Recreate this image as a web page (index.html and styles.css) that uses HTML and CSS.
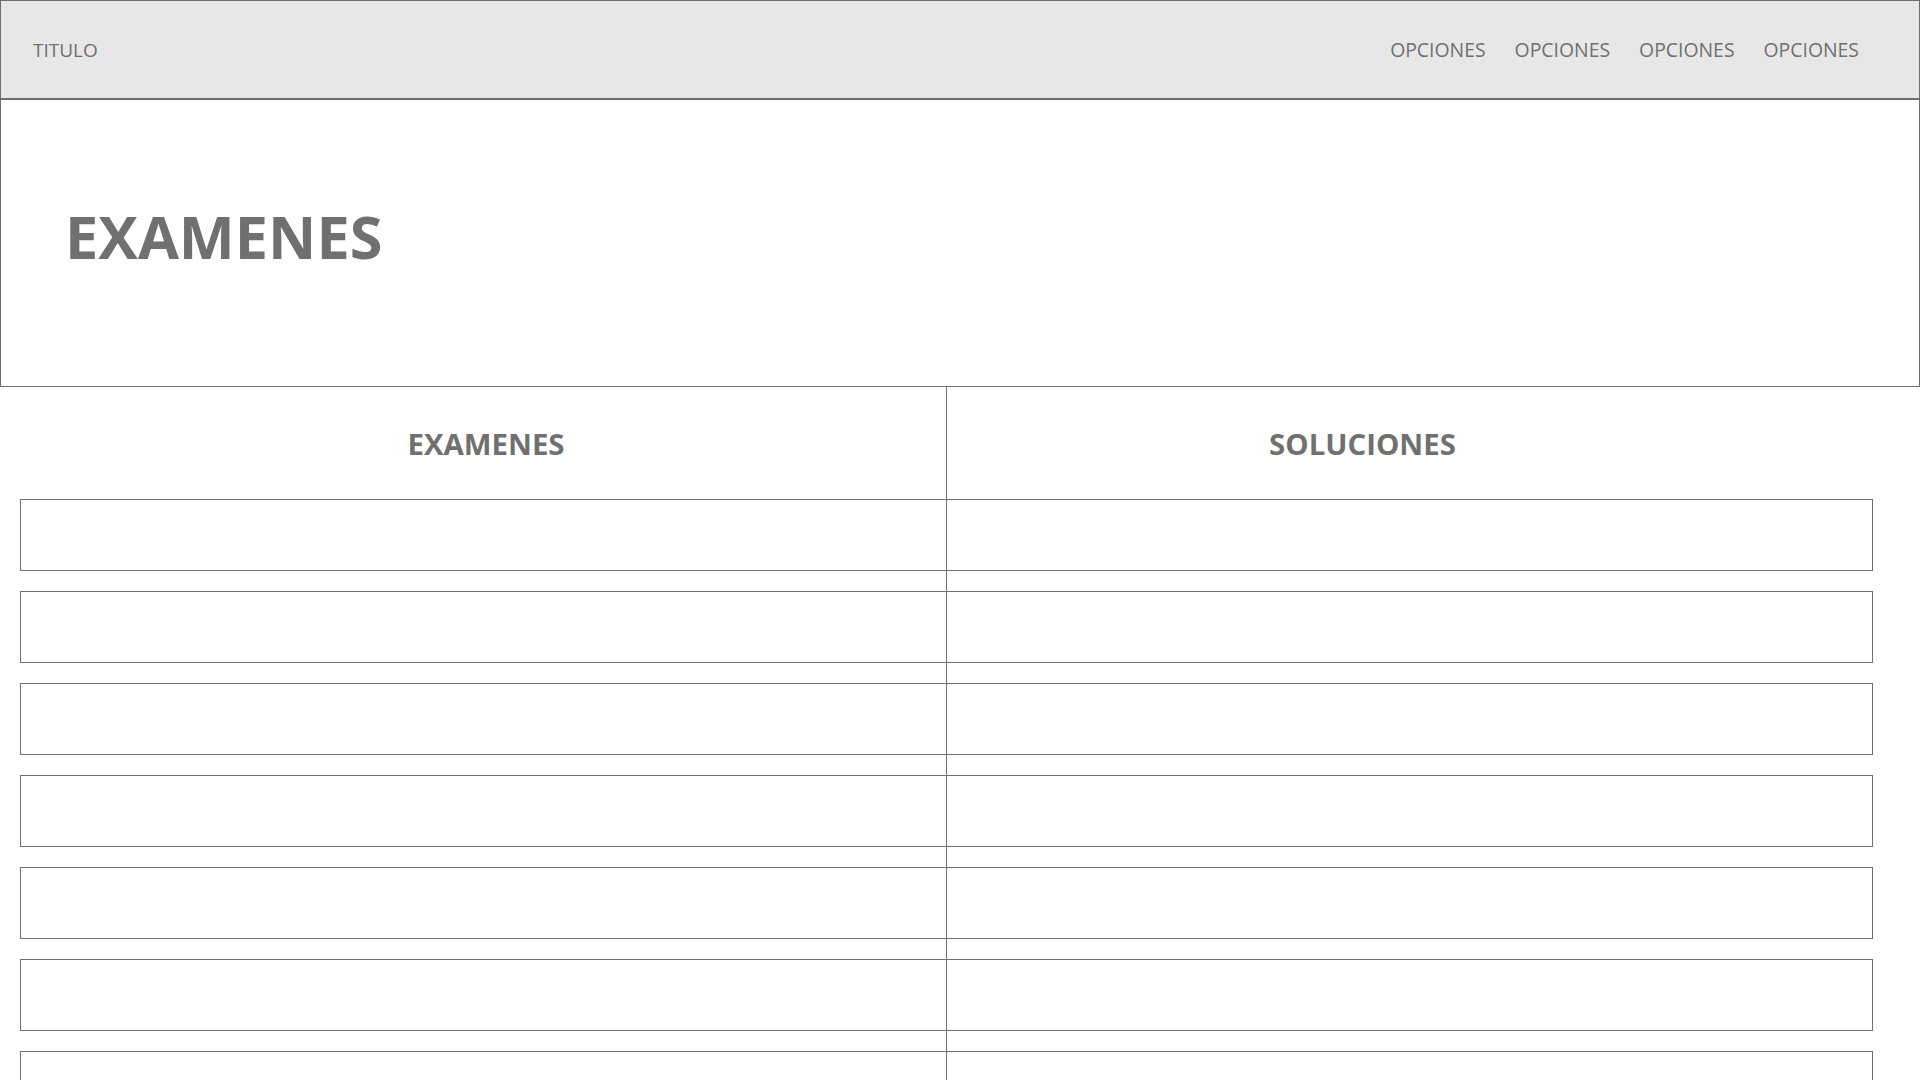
FILE: index.html
```html
<!DOCTYPE html>
<html lang="es">
<head>
<meta charset="utf-8">
<title>Examenes</title>
<link rel="stylesheet" href="styles.css">
</head>
<body>
<header class="topbar">
  <div class="brand">TITULO</div>
  <nav class="nav">
    <a class="nav-item">OPCIONES</a>
    <a class="nav-item">OPCIONES</a>
    <a class="nav-item">OPCIONES</a>
    <a class="nav-item">OPCIONES</a>
  </nav>
</header>
<section class="hero">
  <h1 class="hero-title">EXAMENES</h1>
</section>
<main class="table">
  <div class="col col-left">
    <h2 class="col-head col-head-left">EXAMENES</h2>
    <div class="cell"></div>
    <div class="cell"></div>
    <div class="cell"></div>
    <div class="cell"></div>
    <div class="cell"></div>
    <div class="cell"></div>
    <div class="cell"></div>
    <div class="cell"></div>
  </div>
  <div class="col col-right">
    <h2 class="col-head col-head-right">SOLUCIONES</h2>
    <div class="cell"></div>
    <div class="cell"></div>
    <div class="cell"></div>
    <div class="cell"></div>
    <div class="cell"></div>
    <div class="cell"></div>
    <div class="cell"></div>
    <div class="cell"></div>
  </div>
</main>
</body>
</html>
```
FILE: styles.css
```css
* { box-sizing: border-box; }
html, body { margin: 0; padding: 0; background: #ffffff; }
body {
  font-family: "Open Sans", "Segoe UI", "Noto Sans", sans-serif;
  color: #707070;
}
.topbar {
  height: 99px;
  background: #e7e7e7;
  border: 1px solid #707070;
  display: flex;
  align-items: center;
  justify-content: space-between;
  padding: 0 60px 0 32px;
}
.brand { font-size: 19px; }
.nav { display: flex; gap: 29px; }
.nav-item { font-size: 19.4px; color: #707070; text-decoration: none; }
.hero {
  height: 288px;
  border: 1px solid #707070;
  display: flex;
  align-items: center;
  padding: 0 0 14px 64px;
}
.hero-title {
  margin: 0;
  font-size: 59.4px;
  font-weight: 700;
  line-height: 82px;
}
.table {
  display: flex;
  padding-bottom: 40px;
}
.col { display: flex; flex-direction: column; gap: 20px; }
.col-left { width: 947px; border-right: 1px solid #707070; }
.col-right { flex: 1; }
.col-head {
  margin: 0 0 -20px 0;
  height: 112px;
  display: flex;
  align-items: center;
  justify-content: center;
  padding-top: 2px;
  font-size: 29.4px;
  font-weight: 700;
}
.col-head-left { padding-left: 26px; }
.col-head-right { padding-right: 142px; }
.cell { height: 72px; }
.col-left .cell {
  margin-left: 20px;
  border: 1px solid #707070;
  border-right: none;
}
.col-right .cell {
  margin-right: 47px;
  border: 1px solid #707070;
  border-left: none;
}
```
